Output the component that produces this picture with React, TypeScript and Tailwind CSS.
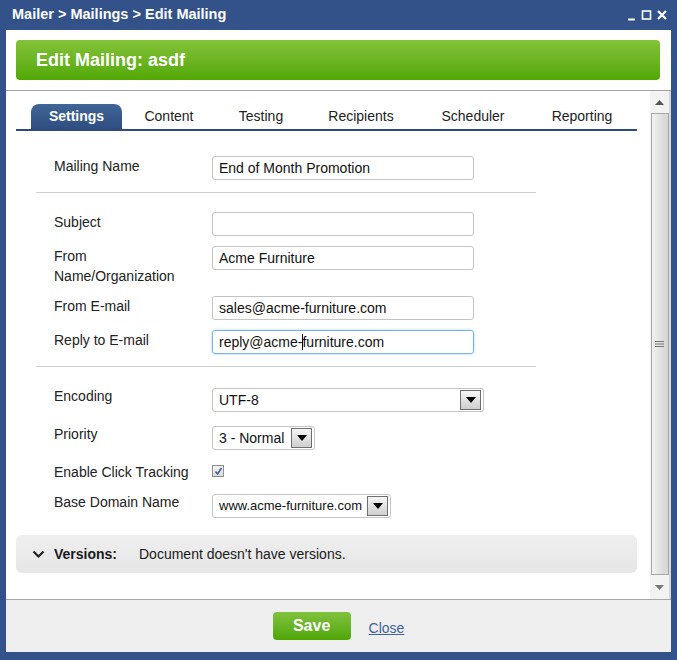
import React from 'react';

type Tab = { label: string; w: string; active?: boolean };

const tabs: Tab[] = [
  { label: 'Settings', w: 'w-[91px]', active: true },
  { label: 'Content', w: 'w-[94px]' },
  { label: 'Testing', w: 'w-[90px]' },
  { label: 'Recipients', w: 'w-[110px]' },
  { label: 'Scheduler', w: 'w-[114px]' },
  { label: 'Reporting', w: 'w-[104px]' },
];

function WindowControls() {
  return (
    <svg width="42" height="12" viewBox="0 0 42 12" fill="none" stroke="#fff" strokeWidth="2">
      <path d="M1 10.5h7" />
      <rect x="15.5" y="2" width="8" height="8" strokeWidth="1.6" />
      <path d="M31 2l8 8M39 2l-8 8" strokeWidth="2.2" />
    </svg>
  );
}

function DropButton() {
  return (
    <span className="flex h-[20px] w-[21px] shrink-0 items-center justify-center border border-[#6f6f6f] bg-gradient-to-b from-[#f6f6f6] to-[#cfcfcf]">
      <svg width="10" height="6" viewBox="0 0 10 6">
        <path d="M0 0h10L5 6z" fill="#000" />
      </svg>
    </span>
  );
}

function TextBox({ children, focused }: { children?: React.ReactNode; focused?: boolean }) {
  return (
    <div
      className={
        focused
          ? 'flex h-[24px] w-[262px] items-center rounded-[3px] border border-[#78b4ea] pl-[6px] text-[14px] text-[#111] shadow-[0_0_3px_#a9d2f5]'
          : 'flex h-[24px] w-[262px] items-center rounded-[3px] border border-[#c4c4c4] pl-[6px] text-[14px] text-[#111]'
      }
    >
      {children}
    </div>
  );
}

function SelectBox({ value, className }: { value: string; className: string }) {
  return (
    <div
      className={`flex h-[24px] items-center justify-between whitespace-nowrap rounded-[3px] border border-[#c4c4c4] pl-[6px] pr-[2px] text-[#111] ${className}`}
    >
      <span>{value}</span>
      <DropButton />
    </div>
  );
}

function Row({ label, children, className }: { label: React.ReactNode; children: React.ReactNode; className: string }) {
  return (
    <div className={`flex items-start pl-[38px] ${className}`}>
      <div className="w-[158px] text-[14px] leading-[20px] text-[#222]">{label}</div>
      {children}
    </div>
  );
}

function Row2({ label, children, className }: { label: string; children: React.ReactNode; className: string }) {
  return (
    <div className={`flex items-start pl-[38px] ${className}`}>
      <div className="w-[158px] text-[14px] leading-[16px] text-[#222]">{label}</div>
      {children}
    </div>
  );
}

export default function App() {
  return (
    <div className="flex h-[660px] w-[677px] flex-col bg-[#34528a] font-['Liberation_Sans',Arial,sans-serif]">
      <div className="flex h-[30px] items-center justify-between pl-[12px] pr-[8px]">
        <span className="text-[14.5px] font-bold text-white">Mailer &gt; Mailings &gt; Edit Mailing</span>
        <WindowControls />
      </div>

      <div className="mb-[8px] ml-[6px] flex w-[665px] flex-1 flex-col bg-white">
        <div className="border-b border-[#a3a3a3] pb-[10px] pl-[10px] pr-[11px] pt-[10px]">
          <div className="flex h-[40px] items-center rounded-[4px] bg-gradient-to-b from-[#84c238] to-[#52a800] pl-[20px] text-[18px] font-bold text-white">
            Edit Mailing: asdf
          </div>
        </div>

        <div className="flex h-[508px]">
          <div className="w-[644px] pl-[10px] pr-[13px] pt-[13px]">
            <div className="flex border-b-2 border-[#2f4b7c] pl-[15px]">
              {tabs.map((t) => (
                <div
                  key={t.label}
                  className={
                    t.active
                      ? `${t.w} flex h-[25px] items-center justify-center rounded-t-[8px] bg-gradient-to-b from-[#416598] to-[#2f4d80] text-[14px] font-bold text-white`
                      : `${t.w} flex h-[25px] items-center justify-center text-[14px] text-[#222]`
                  }
                >
                  {t.label}
                </div>
              ))}
            </div>

            <Row label="Mailing Name" className="mt-[25px]">
              <TextBox>End of Month Promotion</TextBox>
            </Row>
            <div className="ml-[20px] mt-[12px] w-[500px] border-t border-[#cfcfcf]" />

            <Row label="Subject" className="mt-[19px]">
              <TextBox />
            </Row>
            <Row
              label={
                <>
                  From
                  <br />
                  Name/Organization
                </>
              }
              className="mt-[10px]"
            >
              <TextBox>Acme Furniture</TextBox>
            </Row>
            <Row label="From E-mail" className="mt-[10px]">
              <TextBox>sales@acme-furniture.com</TextBox>
            </Row>
            <Row label="Reply to E-mail" className="mt-[10px]">
              <TextBox focused>
                reply@acme-
                <span className="-mr-[1px] inline-block h-[16px] w-[1px] bg-black" />
                furniture.com
              </TextBox>
            </Row>
            <div className="ml-[20px] mt-[12px] w-[500px] border-t border-[#cfcfcf]" />

            <Row2 label="Encoding" className="mt-[21px]">
              <SelectBox value="UTF-8" className="w-[272px] text-[14px]" />
            </Row2>
            <Row2 label="Priority" className="mt-[14px]">
              <SelectBox value="3 - Normal" className="w-[103px] text-[14px]" />
            </Row2>
            <Row2 label="Enable Click Tracking" className="mt-[14px]">
              <span className="mt-[1px] flex h-[12px] w-[12px] items-center justify-center border border-[#8f8f8f] bg-gradient-to-b from-[#f4f4f4] to-[#dcdcdc]">
                <svg width="9" height="9" viewBox="0 0 9 9" fill="none" stroke="#3f5f9a" strokeWidth="1.6">
                  <path d="M1.5 4.5l2 2.5 4-6" />
                </svg>
              </span>
            </Row2>
            <Row2 label="Base Domain Name" className="mt-[14px]">
              <SelectBox value="www.acme-furniture.com" className="w-[179px] text-[13px]" />
            </Row2>

            <div className="mt-[17px] flex h-[38px] items-center rounded-[6px] bg-gradient-to-b from-[#efefef] to-[#e6e6e6] pl-[16px] text-[14px] text-[#1a1a1a]">
              <svg width="13" height="9" viewBox="0 0 13 9" fill="none" stroke="#222" strokeWidth="2.2">
                <path d="M1.5 1.5l5 5 5-5" />
              </svg>
              <span className="ml-[9px] w-[85px] font-bold">Versions:</span>
              <span>Document doesn&apos;t have versions.</span>
            </div>
          </div>

          <div className="flex w-[19px] flex-col items-center bg-[#f3f3f3]">
            <div className="flex h-[22px] items-center justify-center">
              <svg width="9" height="5" viewBox="0 0 9 5">
                <path d="M0 5h9L4.5 0z" fill="#555" />
              </svg>
            </div>
            <div className="flex h-[462px] w-[18px] items-center justify-center border border-[#a7a7a7] bg-gradient-to-r from-[#f2f2f2] to-[#d3d3d3]">
              <svg width="9" height="8" viewBox="0 0 9 8" stroke="#777" strokeWidth="1">
                <path d="M0 1.5h9M0 4h9M0 6.5h9" />
              </svg>
            </div>
            <div className="flex flex-1 items-center justify-center">
              <svg width="9" height="5" viewBox="0 0 9 5">
                <path d="M0 0h9L4.5 5z" fill="#777" />
              </svg>
            </div>
          </div>
          <div className="w-[2px] bg-[#d8d8d8]" />
        </div>

        <div className="flex flex-1 items-start justify-center gap-[18px] border-t border-[#a8a8a8] bg-[#efefef] pt-[12px]">
          <div className="flex h-[28px] w-[78px] items-center justify-center rounded-[4px] bg-gradient-to-b from-[#80c23c] to-[#50a600] text-[16px] font-bold text-white">
            Save
          </div>
          <span className="mt-[6px] text-[14px] text-[#3e5f9c] underline">Close</span>
        </div>
      </div>
    </div>
  );
}
